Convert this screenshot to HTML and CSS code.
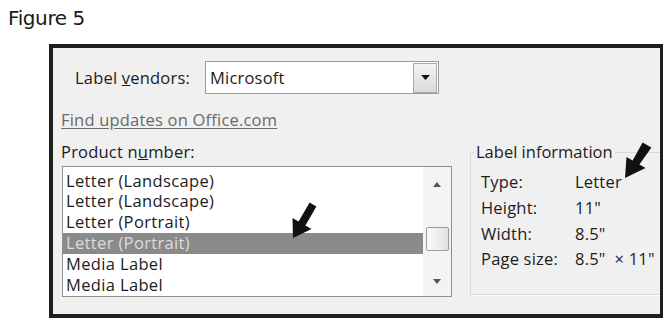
FILE: index.html
```html
<!DOCTYPE html>
<html>
<head>
<meta charset="utf-8">
<link rel="stylesheet" href="styles.css">
</head>
<body>
<p class="fig">Figure 5</p>
<div class="dialog">
  <div class="vendor-row">
    <span class="vlabel">Label <u>v</u>endors:</span>
    <div class="combo">
      <span class="combo-text">Microsoft</span>
      <span class="drop"><svg width="9" height="5" viewBox="0 0 9 5"><polygon points="0,0 9,0 4.5,5" fill="#111"/></svg></span>
    </div>
  </div>
  <a class="link">Find updates on Office.com</a>
  <div class="cols">
    <div class="left">
      <div class="plabel">Product n<u>u</u>mber:</div>
      <div class="listbox">
        <ul class="items">
          <li>Letter (Landscape)</li>
          <li>Letter (Landscape)</li>
          <li>Letter (Portrait)</li>
          <li class="sel">Letter (Portrait)</li>
          <li>Media Label</li>
          <li>Media Label</li>
        </ul>
        <div class="scroll">
          <svg class="sarrow" width="8" height="5" viewBox="0 0 8 5"><polygon points="0,5 8,5 4,0" fill="#555"/></svg>
          <div class="thumb"></div>
          <svg class="sarrow" width="8" height="5" viewBox="0 0 8 5"><polygon points="0,0 8,0 4,5" fill="#555"/></svg>
        </div>
      </div>
    </div>
    <fieldset class="group">
      <legend>Label information</legend>
      <div class="info">
        <span>Type:</span><span>Letter</span>
        <span>Height:</span><span>11"</span>
        <span>Width:</span><span>8.5"</span>
        <span>Page size:</span><span>8.5" &nbsp;×&nbsp;11"</span>
      </div>
    </fieldset>
  </div>
</div>
<svg class="arrows" width="671" height="322" viewBox="0 0 671 322">
  <polygon fill="#111" points="309.6,202.5 316.4,206.5 305.4,225.5 311.5,229.1 293,238 292.5,217.9 298.6,221.5"/>
  <polygon fill="#111" points="642.6,142.5 651.4,147.5 639.4,164.5 645.5,168.1 625,178 626.5,156.9 632.6,160.5"/>
</svg>
</body>
</html>
```
FILE: styles.css
```css
html, body {
  background: #ffffff;
}
body {
  margin: 8px;
  position: relative;
}
.fig {
  margin: 0;
  font-family: "DejaVu Sans", sans-serif;
  font-size: 20px;
  line-height: 20px;
  letter-spacing: -0.4px;
  color: #1a1a1a;
}
.dialog {
  box-sizing: border-box;
  width: 615px;
  height: 274px;
  margin: 16px 0 0 41px;
  border: 4px solid #1e1e1e;
  background: #f0f0f0;
  overflow: hidden;
  padding: 13px 0 0 8px;
  font-family: "Open Sans", sans-serif;
  font-size: 16.5px;
  letter-spacing: 0.2px;
  color: #1c1c1c;
}
.vendor-row {
  display: flex;
  align-items: center;
  height: 33px;
}
.vlabel {
  width: 144px;
  padding-left: 14px;
  box-sizing: border-box;
  line-height: 20px;
}
.combo {
  box-sizing: border-box;
  width: 234px;
  height: 33px;
  border: 1px solid #9a9a9a;
  background: #fff;
  display: flex;
  align-items: center;
  justify-content: space-between;
  padding: 1px 1px 1px 4px;
}
.combo-text {
  line-height: 20px;
}
.drop {
  box-sizing: border-box;
  width: 24px;
  height: 30px;
  border: 1px solid #a8a8a8;
  background: linear-gradient(#f4f4f4, #dadada);
  display: flex;
  align-items: center;
  justify-content: center;
}
.link {
  display: block;
  width: max-content;
  margin-top: 16px;
  line-height: 20px;
  color: #6a6a6a;
  text-decoration: underline;
  text-underline-offset: 2px;
}
.cols {
  display: flex;
  margin-top: 12px;
  gap: 18px;
}
.left {
  width: 391px;
}
.plabel {
  line-height: 20px;
}
.listbox {
  box-sizing: border-box;
  margin: 4px 0 0 1px;
  width: 390px;
  height: 131px;
  border: 1px solid #8f8f8f;
  background: #fff;
  display: flex;
}
.items {
  list-style: none;
  margin: 0;
  padding: 3.6px 0 0 0;
  flex: 1;
  letter-spacing: 0.35px;
}
.items li {
  height: 20.8px;
  line-height: 20.8px;
  padding-left: 3px;
  white-space: nowrap;
}
.items li.sel {
  background: #8a8a8a;
  color: #dcdcdc;
}
.scroll {
  width: 28px;
  background: #f3f3f3;
  display: flex;
  flex-direction: column;
  align-items: center;
  padding: 15px 0 12px;
  box-sizing: border-box;
}
.sarrow {
  display: block;
}
.thumb {
  box-sizing: border-box;
  width: 23px;
  height: 24px;
  margin: 40px 0 auto;
  border: 1px solid #9c9c9c;
  border-radius: 2px;
  background: linear-gradient(90deg, #fafafa, #e2e2e2);
}
.group {
  flex: 1;
  margin: 0 -24px 0 0;
  padding: 7px 0 20px 10px;
  height: 153px;
  box-sizing: border-box;
  border: 1px solid #d9d9d9;
  box-shadow: 1px 1px 0 #fbfbfb;
  min-width: 0;
}
.group legend {
  margin-left: -7px;
  padding: 0 2px;
  line-height: 20px;
  letter-spacing: 0;
}
.info {
  display: grid;
  grid-template-columns: 94px auto;
  grid-auto-rows: 25.7px;
  align-items: center;
  white-space: nowrap;
}
.arrows {
  position: absolute;
  left: -8px;
  top: -8px;
  pointer-events: none;
}
```
